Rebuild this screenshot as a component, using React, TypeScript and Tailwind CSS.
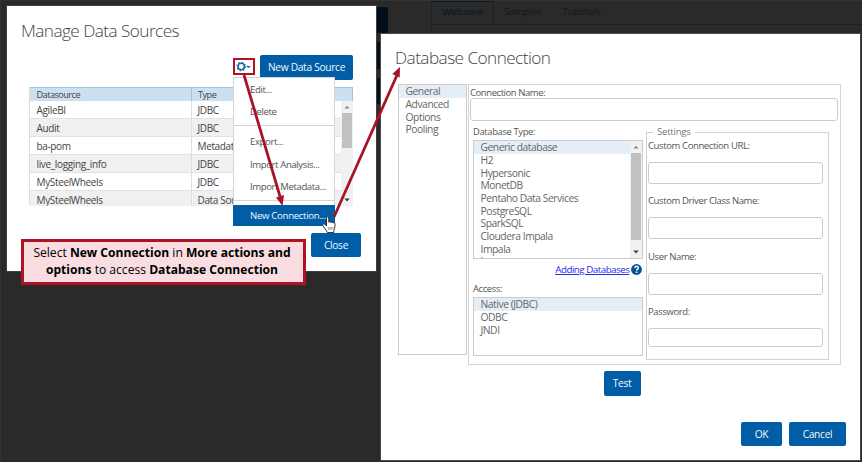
import React from "react";

const rows = [
  ["AgileBI", "JDBC"],
  ["Audit", "JDBC"],
  ["ba-pom", "Metadata"],
  ["live_logging_info", "JDBC"],
  ["MySteelWheels", "JDBC"],
  ["MySteelWheels", "Data Source"],
];

const databases = [
  "Generic database",
  "H2",
  "Hypersonic",
  "MonetDB",
  "Pentaho Data Services",
  "PostgreSQL",
  "SparkSQL",
  "Cloudera Impala",
  "Impala",
  "Ingres",
];

function Button({ className, children }: { className: string; children: React.ReactNode }) {
  return (
    <button
      className={`flex shrink-0 items-center justify-center rounded-[2px] bg-[#005da6] text-[10.2px] font-medium tracking-[-0.3px] whitespace-nowrap text-[#f2f8fc] ${className}`}
    >
      {children}
    </button>
  );
}

function ScrollBar({ className, thumb }: { className: string; thumb: string }) {
  return (
    <div className={`flex shrink-0 flex-col items-center bg-[#f1f1f1] ${className}`}>
      <svg className="h-3 w-full shrink-0" viewBox="0 0 12 12">
        <path d="M3.4 7.6 6 4.8l2.6 2.8z" fill="#8a8a8a" />
      </svg>
      <div className={`bg-[#c1c1c1] ${thumb}`} />
      <svg className="mt-auto h-3 w-full shrink-0" viewBox="0 0 12 12">
        <path d="M3.2 4.4 6 7.4l2.8-3z" fill="#404040" />
      </svg>
    </div>
  );
}

function List({ items, className }: { items: string[]; className: string }) {
  return (
    <ul className={`min-w-0 flex-1 overflow-hidden text-[10.3px] tracking-[-0.45px] text-[#666] ${className}`}>
      {items.map((item, i) => (
        <li
          key={item}
          className={`flex h-[12.7px] items-center pl-[6.5px] leading-none whitespace-nowrap ${i === 0 ? "bg-[#e5eef6]" : ""}`}
        >
          {item}
        </li>
      ))}
    </ul>
  );
}

function Field({ label, className }: { label: string; className: string }) {
  return (
    <label className="flex flex-col">
      <span className="h-[14px] text-[9.5px] leading-[14px] tracking-[-0.38px] whitespace-nowrap">{label}</span>
      <input className={`mt-[9px] w-[175px] rounded-[3px] border border-[#ccc] bg-white ${className}`} />
    </label>
  );
}

function Backdrop() {
  return (
    <div className="flex h-full border-t border-[#333]">
      <aside className="flex w-[388px] flex-col items-end gap-[9px] border-l border-[#333] pt-[6px]">
        <div className="h-[26px] w-[200px] rounded-[2px] bg-[#020e1a]" />
        <div className="mr-[6px] h-[27px] w-[200px] bg-[#020e1a]" />
        <div className="mr-[6px] h-[26px] w-[200px] bg-[#020e1a]" />
      </aside>
      <main className="ml-[43px] flex flex-1 flex-col border-l border-[#202020]">
        <nav className="flex h-[24px] border-b border-[#202020] text-[9.7px] font-medium tracking-[-0.2px] text-[#161616]">
          <span className="flex w-[62px] justify-center border-t border-r border-t-[#071a2b] border-r-[#202020] pt-[3px] font-semibold tracking-[-0.35px] text-[#0a1a2a]">
            Welcome
          </span>
          <span className="ml-[10px] pt-[4px]">Samples</span>
          <span className="ml-[22px] pt-[4px]">Tutorials</span>
        </nav>
      </main>
    </div>
  );
}

function ManageDataSources() {
  return (
    <section className="absolute top-[6px] left-[7px] flex h-[265px] w-[369px] flex-col bg-white shadow-[0_0_0_1px_#3f3f3f]">
      <h1 className="ml-[14px] mt-[13px] h-[24px] text-[17.2px] leading-[24px] font-light tracking-[-0.55px] whitespace-nowrap text-[#444]">
        Manage Data Sources
      </h1>
      <div className="mt-[12px] mr-[23px] flex justify-end gap-[5px]">
        <div className="mt-[3px] flex h-[17px] w-[22px] items-center justify-center border-[2.5px] border-[#b01124]">
          <svg className="h-[11px] w-[16px]" viewBox="0 0 16 11" fill="none">
            <circle cx="5.2" cy="5.5" r="3.2" stroke="#1464a8" strokeWidth="1.5" />
            <circle cx="5.2" cy="5.5" r="4.3" stroke="#1464a8" strokeWidth="1.1" strokeDasharray="1.4 1.98" />
            <path d="m10.8 4.8 1.7 1.7 1.7-1.7" stroke="#1464a8" strokeWidth="1.2" />
          </svg>
        </div>
        <Button className="h-[25px] w-[93px] pt-px">New Data Source</Button>
      </div>
      <div className="mt-[7px] ml-[22px] flex h-[119px] w-[324px] flex-col overflow-hidden border-l border-[#ddd] text-[10px] tracking-[-0.35px] text-[#444]">
        <div className="flex h-[14px] shrink-0 items-center border-t border-r border-[#9dc6e0] bg-[#cce0ef] text-[9.1px] tracking-[-0.5px]">
          <span className="w-[161px] pt-px pl-[6.5px]">Datasource</span>
          <span className="flex h-full items-center border-l border-[#9dc6e0] pt-px pl-[6px]">Type</span>
        </div>
        <div className="flex min-h-0 flex-1">
          <div className="flex-1 overflow-hidden">
            {rows.map(([name, type], i) => (
              <div
                key={i}
                className={`flex h-[18px] items-center border-b border-[#e2e2e2] ${i % 2 ? "bg-[#f0f0f0]" : "bg-white"}`}
              >
                <span className="w-[161px] pt-px pl-[6.5px]">{name}</span>
                <span className="flex h-full items-center border-l border-[#ddd] pt-px pl-[5.5px] whitespace-nowrap">
                  {type}
                </span>
              </div>
            ))}
          </div>
          <ScrollBar className="w-[12px]" thumb="h-[35px] w-[10px]" />
        </div>
      </div>
      <div className="mt-[27px] mr-[15px] flex justify-end">
        <Button className="h-[24px] w-[50px] pt-px">Close</Button>
      </div>
    </section>
  );
}

function ActionsMenu() {
  return (
    <div className="absolute top-[77px] left-[233px] flex h-[149px] w-[102px] flex-col border border-[#d5d5d5] bg-white text-[9.6px] tracking-[-0.4px] whitespace-nowrap text-[#555]">
      <div className="flex h-[47px] flex-col pt-px">
        <span className="flex h-[22px] items-center pl-[16px]">Edit...</span>
        <span className="flex h-[22px] items-center pt-px pl-[16px]">Delete</span>
      </div>
      <div className="flex h-[75px] flex-col border-t border-[#d5d5d5] pt-[5px]">
        <span className="flex h-[22px] items-center pl-[16px]">Export...</span>
        <span className="flex h-[22.5px] items-center pt-px pl-[16px]">Import Analysis...</span>
        <span className="flex h-[22.5px] items-center pl-[16px]">Import Metadata...</span>
      </div>
      <div className="-mx-px -mb-px flex flex-1 flex-col border-t border-[#d5d5d5] pt-[4px]">
        <span className="flex flex-1 items-center bg-[#005da6] pt-[2px] pl-[17px] tracking-[-0.3px] text-[#f2f8fc]">
          New Connection...
        </span>
      </div>
    </div>
  );
}

function DatabaseConnection() {
  return (
    <section className="absolute top-[34px] left-[381px] flex h-[426px] w-[479px] flex-col bg-white text-[#555] shadow-[0_0_0_1px_#4a4a4a]">
      <h1 className="mt-[12px] ml-[14px] h-[24px] text-[17.2px] leading-[24px] font-light tracking-[-0.55px] whitespace-nowrap text-[#444]">
        Database Connection
      </h1>
      <div className="mt-[14px] ml-[17px] flex items-start gap-px">
        <div className="flex h-[271px] w-[69px] border border-[#ccc]">
          <List items={["General", "Advanced", "Options", "Pooling"]} className="" />
        </div>
        <div className="flex h-[281px] w-[373px] flex-col border border-[#d5d5d5] pl-px">
          <span className="h-[13px] text-[9.5px] leading-[15px] tracking-[-0.43px]">Connection Name:</span>
          <input className="h-[23px] w-[368px] rounded-[3px] border border-[#ccc]" />
          <div className="flex">
            <div className="ml-[3px] flex w-[170px] flex-col text-[9.4px] tracking-[-0.35px]">
              <span className="mt-[3px] h-[16px] leading-[15px]">Database Type:</span>
              <div className="flex h-[119px] border border-[#ccc]">
                <List items={databases} className="h-[117px]" />
                <ScrollBar className="w-[12px]" thumb="h-[87px] w-[10px]" />
              </div>
              <div className="mt-[5px] flex h-[13px] items-center justify-end gap-[1.5px] pr-px">
                <a className="text-[9.8px] tracking-[-0.5px] whitespace-nowrap text-[#2a2aee] underline">
                  Adding Databases
                </a>
                <svg className="mb-[2px] h-[11px] w-[11px]" viewBox="0 0 11 11" fill="none">
                  <circle cx="5.5" cy="5.5" r="5.4" fill="#005496" />
                  <path d="M3.8 4.1c0-2.4 3.6-2.3 3.5-.2 0 1.2-1.7 1.3-1.7 2.6" stroke="#fff" strokeWidth="1.4" />
                  <path d="M4.8 7.5h1.6V9H4.8z" fill="#fff" />
                </svg>
              </div>
              <span className="mt-[4px] h-[15px] leading-[15px]">Access:</span>
              <div className="mt-px flex h-[59px] border border-[#ccc]">
                <List items={["Native (JDBC)", "ODBC", "JNDI"]} className="" />
              </div>
            </div>
            <fieldset className="mt-[4px] ml-[3px] h-[235px] w-[183px] border border-[#d0d0d0] pl-px">
              <legend className="ml-[5px] h-[14px] px-[4px] text-[9.5px] leading-[14px] tracking-[-0.2px] text-[#777]">
                Settings
              </legend>
              <div className="flex flex-col gap-[10.3px]">
                <Field label="Custom Connection URL:" className="h-[22px]" />
                <Field label="Custom Driver Class Name:" className="h-[22px]" />
                <Field label="User Name:" className="h-[22px]" />
                <Field label="Password:" className="h-[19px]" />
              </div>
            </fieldset>
          </div>
        </div>
      </div>
      <div className="mt-[6px] flex justify-center pl-[3px]">
        <Button className="h-[25px] w-[37px]">Test</Button>
      </div>
      <div className="mt-[26px] mr-[14px] flex justify-end gap-[7px]">
        <Button className="h-[24px] w-[41px] pt-px">OK</Button>
        <Button className="h-[24px] w-[57px] pt-px">Cancel</Button>
      </div>
    </section>
  );
}

export default function App() {
  return (
    <div className="relative h-[462px] w-[862px] overflow-hidden bg-[#2a2a2a] font-['Open_Sans',sans-serif]">
      <Backdrop />
      <ManageDataSources />
      <ActionsMenu />
      <DatabaseConnection />
      <p className="absolute top-[239px] left-[21px] h-[46px] w-[285px] border-[3px] border-[#b01124] bg-[#fadde0] pt-[3px] pr-[3px] text-center text-[12.1px] leading-[16.5px] whitespace-nowrap text-black">
        Select <b>New Connection</b> in <b>More actions and</b>
        <br />
        <b>options</b> to access <b>Database Connection</b>
      </p>
      <svg className="absolute inset-0 h-[462px] w-[862px]" viewBox="0 0 862 462" fill="none">
        <path d="M244 75 280.5 198M334 217 397.5 74" stroke="#a81426" strokeWidth="2.8" />
        <path d="m282.500 206-6.500-8.500 8-2.400zM400 67l-.3 10.500-7.400-3.600z" fill="#a81426" />
        <path
          d="M327.400 232.500c-1-2.400-3.400-4.800-4.600-7-.7-1.500.9-2.200 2-1.300l1.700 1.800V218c0-1.700 2.200-1.700 2.300 0v4.300c.3-1.100 1.900-1 2.100.3.400-1 2-.8 2.100.5.500-.8 2-.4 2 .7 0 3-.1 4.700-1.100 6.300v2.400h-6.500z"
          fill="#fff"
          stroke="#222"
          strokeWidth=".9"
        />
        <path d="M329 227v3M331 227v3M333 227v2" stroke="#444" strokeWidth=".7" />
      </svg>
    </div>
  );
}
